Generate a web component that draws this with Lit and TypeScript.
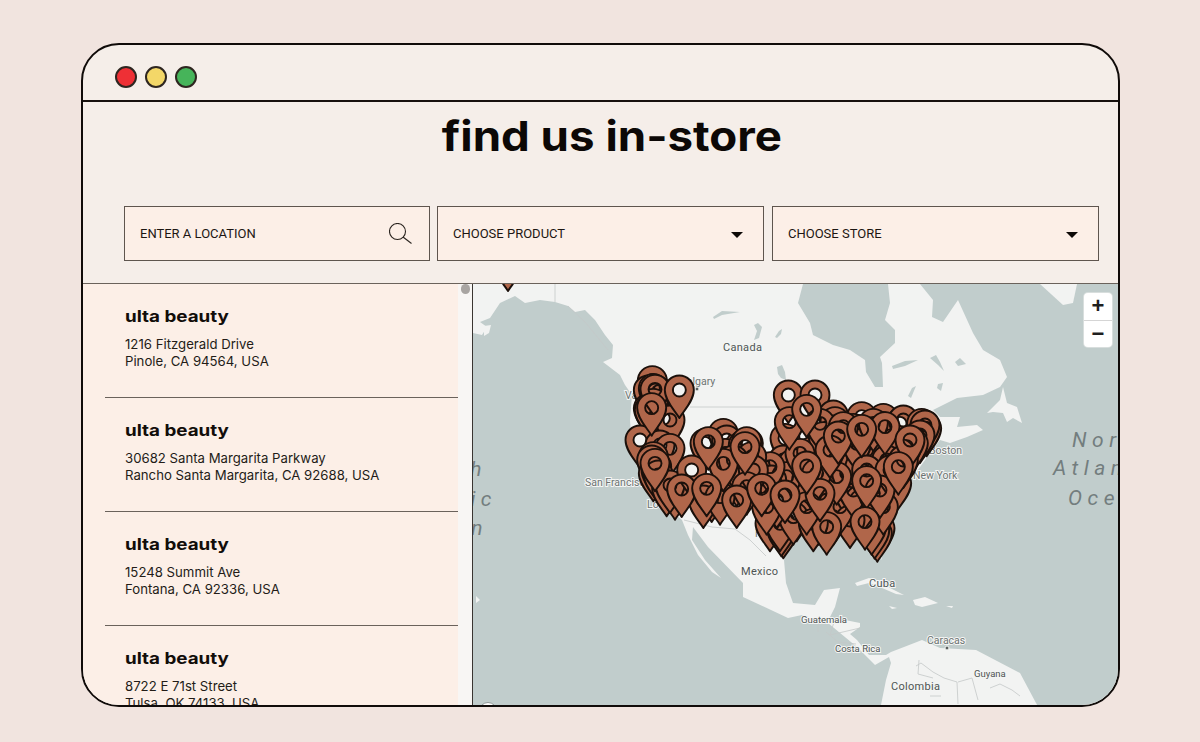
import { LitElement, html, svg, css } from "lit";
import { customElement } from "lit/decorators.js";

const STORES = [
  ["1216 Fitzgerald Drive", "Pinole, CA 94564, USA"],
  ["30682 Santa Margarita Parkway", "Rancho Santa Margarita, CA 92688, USA"],
  ["15248 Summit Ave", "Fontana, CA 92336, USA"],
  ["8722 E 71st Street", "Tulsa, OK 74133, USA"],
];

const PIN = "M0 28C-4 21-14.5 11-14.5 0A14.5 14.5 0 1 1 14.5 0C14.5 11 4 21 0 28ZM6.5 0A6.5 6.5 0 1 0-6.5 0A6.5 6.5 0 1 0 6.5 0Z";

// head centres, measured on a 3x grid whose origin is at (620,360)
const BACK = [
  [97,62],[85,90],[115,95],[100,85],[105,90],[100,130],[85,145],[130,175],[150,180],[88,150],[60,240],[120,255],[150,265],[100,290],[95,300],[110,320],[100,340],[108,330],[115,345],[140,385],[165,395],[150,375],[260,392],[275,402],[255,250],[310,220],[320,240],[315,280],[385,250],[370,255],[380,245],[350,355],[420,340],[505,105],[585,105],[495,235],[490,300],[520,310],[575,275],[640,165],[645,185],[640,220],[725,170],[700,205],[660,260],[670,280],[630,315],[615,350],[650,390],[680,340],[700,290],[790,175],[840,190],[850,180],[905,190],[920,205],[915,195],[900,225],[880,250],[760,310],[780,280],[820,250],[800,400],[770,370],[810,360],[760,240],[740,270],[555,400],[560,360],[605,445],[595,470],[680,450],[760,450],[745,470],[770,495],[780,505],[772,521],[764,512],[755,500],[465,470],[450,490],[490,511],[484,505],[480,490],[530,460],[520,470],[455,360],[500,350],[620,420],[640,470],[580,490],[720,420],[720,320],[600,300],[690,400],[780,340],[860,260],[710,250],[610,230],[600,190],[670,200],[760,190],[840,280],[450,320],[540,280],[470,420],[395,290],[340,300],[250,420],[300,410],[440,440],[800,300],[830,370],[790,440],[730,430],[690,480],[660,440],[620,500],[700,390],[760,400],[740,330],[650,350],[590,340],[810,330],[850,300],[630,270],[560,440],[400,330],[310,310],[380,380],[780,390],[600,400],
];
const FRONT = [
  [105,88],[178,90],[95,143],[105,310],[215,330],[185,387],[260,385],[265,245],[375,260],[350,420],[425,385],[508,185],[560,148],[560,318],[495,405],[740,362],[655,228],[795,200],[725,208],[870,240],[835,320],[735,485],
];

const LAND = "473,284 920,284 933,300 932,317 943,322 958,300 973,333 983,350 1000,360 1007,377 1000,387 983,395 957,398 933,410 940,417 960,417 957,427 977,425 983,430 967,437 950,443 940,440 930,453 920,467 913,477 906,490 895,500 885,515 880,525 882,560 872,540 862,525 845,525 825,530 815,533 800,530 790,540 784,560 786,583 793,603 815,605 824,590 840,588 835,607 830,617 860,623 860,627 850,634 857,640 869,655 886,655 891,652 904,647 922,640 940,648 976,650 1020,673 1036,703 1040,710 880,710 886,680 891,663 889,657 875,665 857,647 828,623 802,615 788,618 743,597 743,583 708,547 693,527 692,540 705,560 721,578 712,572 698,555 688,535 682,520 665,505 650,490 640,470 632,450 630,420 632,395 625,385 620,375 603,362 612,358 613,345 605,335 595,320 585,310 575,312 568,306 555,302 540,300 525,303 515,296 500,303 490,318 480,322 487,327 482,335 473,333";
const SEA_SHAPES = [
  "803,284 798,303 810,323 813,335 833,345 850,350 865,360 866,372 875,387 883,387 882,363 880,357 895,343 895,330 885,320 890,303 888,284",
  "777,367 782,365 785,372 786,380 781,378 778,374",
  "713,317 722,311 740,312 722,315 714,319",
  "754,325 758,323 762,327 759,338 754,340 757,331",
  "775,337 779,331 782,329 781,334 777,338",
  "892,366 905,361 918,360 905,366 893,369",
  "930,358 936,355 940,362 944,371 938,365",
  "955,362 960,358 966,364 958,366",
  "908,396 912,388 916,386 911,398",
  "938,384 943,383 941,391 937,388",
];
const ISLANDS = [
  "987,413 1000,400 1003,387 1007,403 1017,407 1022,423 1013,418 1007,422 1003,413 993,412",
  "1040,284 1063,305 1073,303 1077,284",
  "855,583 869,578 880,581 890,588 904,595 896,594 882,588 869,583 857,586",
  "913,600 925,597 938,603 922,607 915,605",
  "889,606 897,608 892,609",
  "946,606 953,606 952,608",
  "476,596 480,600 476,603",
  "484,326 491,325 489,333 484,336",
];
const BORDERS = [
  "M555 284V302", "M568 306L585 322L608 350", "M690 407H800", "M684 520L712 527L735 529L750 540L766 556",
  "M818 632L818 620L834 622L830 635L860 628", "M826 632L838 642L856 644",
  "M916 666L921 663L933 672L944 678L957 682L958 704", "M958 682L972 678L978 700", "M990 688L1000 684L1012 690L1020 696",
  "M919 660L918 674L933 678", "M930 696L941 696",
];
const LABELS: [string, number, number, string][] = [
  ["Canada", 723, 351, "c"], ["Calgary", 680, 385, "s"], ["Vancouver", 625, 399, "s"],
  ["San Francisco", 585, 486, "s"], ["Los Angeles", 647, 508, "s"], ["Houston", 755, 537, "s"],
  ["Boston", 929, 454, "s"], ["New York", 913, 479, "s"],
  ["Mexico", 741, 575, "c"], ["Cuba", 869, 587, "c"], ["Guatemala", 801, 623, "t"],
  ["Costa Rica", 835, 652, "t"], ["Caracas", 927, 644, "s"], ["Colombia", 891, 690, "c"], ["Guyana", 974, 677, "t"],
];
const OCEAN: [string, number, number, string][] = [
  ["North", 1072, 447, "start"], ["Atlantic", 1053, 475, "start"], ["Ocean", 1068, 505, "start"],
  ["North", 487, 476, "end"], ["Pacific", 497, 506, "end"], ["Ocean", 488, 535, "end"],
];

@customElement("app-root")
export class AppRoot extends LitElement {
  static styles = css`
    :host { display: block; width: 1200px; height: 742px; background: #f1e4df; font-family: "Inter", "Liberation Sans", sans-serif; color: #17120f; }
    .page { display: flex; height: 742px; padding: 43px 80px 35px 81px; box-sizing: border-box; }
    .window { flex: 1; display: flex; flex-direction: column; border: 2px solid #100b09; border-radius: 38px; overflow: hidden; background: #f5eee9; }
    .chrome { flex: none; display: flex; align-items: center; gap: 8px; height: 57px; padding: 8px 0 0 32px; box-sizing: border-box; border-bottom: 2px solid #17110e; }
    .dot { width: 22px; height: 22px; box-sizing: border-box; border-radius: 50%; border: 2px solid #2e2620; }
    .red { background: #ee3035; } .yellow { background: #f3d768; } .green { background: #46b45a; }
    .head { flex: none; height: 182px; box-sizing: border-box; padding: 8px 0 0 22px; border-bottom: 1.5px solid #6a625b; display: flex; flex-direction: column; align-items: center; }
    h1 { margin: 0; font-size: 41px; line-height: 52px; font-weight: 700; color: #0c0806; transform: scaleX(1.113); }
    .filters { display: grid; grid-template-columns: 306px 327px 328px; column-gap: 7px; margin-top: 44px; }
    .field { height: 55px; box-sizing: border-box; border: 1.5px solid #5e554e; background: #fcefe7; display: flex; align-items: center; justify-content: space-between; padding: 0 20px 0 15px; font-family: "Roboto", sans-serif; font-size: 13px; color: #1c1612; }
    .field.last { margin-left: 1px; }
    .caret { width: 0; height: 0; border-left: 6.5px solid transparent; border-right: 6.5px solid transparent; border-top: 6.5px solid #0d0907; margin-top: 2px; }
    .search { display: block; margin-right: -2.5px; }
    .body { flex: 1; min-height: 0; display: flex; }
    .list { flex: none; width: 375px; box-sizing: border-box; padding-left: 22px; background: #fcefe7; overflow: hidden; }
    .item { height: 114px; box-sizing: border-box; border-bottom: 1.5px solid #6a625b; padding: 21px 0 0 20px; }
    .item:last-child { border-bottom: none; }
    h2 { margin: 0; font-size: 16px; line-height: 22px; font-weight: 700; color: #120d0a; transform: scaleX(1.175); transform-origin: left center; }
    .addr { margin-top: 9px; font-size: 13.2px; line-height: 17px; color: #231c17; }
    .track { flex: none; width: 14px; background: #f8f6f4; }
    .thumb { width: 9px; height: 10px; margin-left: 3px; border-radius: 5px; background: #a9a5a2; }
    .map { flex: 1; min-width: 0; position: relative; border-left: 1.5px solid #3a3531; overflow: hidden; background: #c1cdcc; }
    .map > svg { display: block; position: absolute; right: 0; top: 0; }
    .zoom { position: absolute; top: 9px; right: 6px; width: 28px; height: 54px; background: #fff; border-radius: 4px; display: flex; flex-direction: column; box-shadow: 0 0 0 1px #d8dedd; }
    .zoom span { flex: 1; display: flex; align-items: center; justify-content: center; font: 700 22px/1 "Liberation Sans", sans-serif; color: #1f1f1f; }
    .zoom span + span { border-top: 1px solid #d5d5d5; }
    .land { fill: #f2f3f2; }
    .sea { fill: #c1cdcc; }
    .bd { fill: none; stroke: #c4c8c8; stroke-width: 0.8; }
    .label { font-family: "Roboto", sans-serif; fill: #4e5453; stroke: #f4f5f4; stroke-width: 2px; paint-order: stroke; }
    .c { font-size: 11px; letter-spacing: 0.3px; }
    .s { font-size: 10.5px; fill: #6d7372; }
    .t { font-size: 9.5px; }
    .ocean { font-family: "Roboto", sans-serif; font-style: italic; font-size: 21px; letter-spacing: 5.5px; fill: #737d7e; }
    .pin { fill: #b0664a; fill-rule: evenodd; stroke: #1b100b; stroke-width: 1.9; stroke-linejoin: round; }
    .dotmark { fill: #5a5f5e; stroke: #f4f5f4; }
  `;

  private pin([x, y]: number[]) {
    return svg`<path class="pin" transform="translate(${620 + x / 3} ${360 + y / 3})" d=${PIN}></path>`;
  }

  private map() {
    return svg`<svg width="645" height="421" viewBox="473 284 645 421">
      <polygon class="land" points=${LAND}></polygon>
      ${SEA_SHAPES.map((p) => svg`<polygon class="sea" points=${p}></polygon>`)}
      ${ISLANDS.map((p) => svg`<polygon class="land" points=${p}></polygon>`)}
      ${BORDERS.map((d) => svg`<path class="bd" d=${d}></path>`)}
      ${OCEAN.map(([t, x, y, a]) => svg`<text class="ocean" text-anchor=${a} x=${x} y=${y}>${t}</text>`)}
      ${LABELS.map(([t, x, y, c]) => svg`<text class="label ${c}" x=${x} y=${y}>${t}</text>`)}
      <circle class="dotmark" cx="697" cy="389" r="2"></circle>
      <circle class="dotmark" cx="947" cy="648" r="2"></circle>
      <circle cx="488" cy="711" r="8.5" fill="#fff" stroke="#8f9897"></circle>
      <path class="pin" transform="translate(508 263)" d=${PIN}></path>
      ${BACK.map((p) => this.pin(p))}
      ${FRONT.map((p) => this.pin(p))}
    </svg>`;
  }

  render() {
    return html`<div class="page"><div class="window">
      <div class="chrome"><i class="dot red"></i><i class="dot yellow"></i><i class="dot green"></i></div>
      <div class="head">
        <h1>find us in-store</h1>
        <div class="filters">
          <div class="field"><span>ENTER A LOCATION</span>
            <svg class="search" width="23" height="21" viewBox="0 0 23 21" fill="none" stroke="#2b2520" stroke-width="1.1"><circle cx="8.5" cy="8.5" r="8"></circle><path d="M14 14L22.5 20.5"></path></svg>
          </div>
          <div class="field"><span>CHOOSE PRODUCT</span><i class="caret"></i></div>
          <div class="field last"><span>CHOOSE STORE</span><i class="caret"></i></div>
        </div>
      </div>
      <div class="body">
        <div class="list">
          ${STORES.map(([a, b]) => html`<div class="item"><h2>ulta beauty</h2><div class="addr">${a}<br />${b}</div></div>`)}
        </div>
        <div class="track"><div class="thumb"></div></div>
        <div class="map">
          ${this.map()}
          <div class="zoom"><span>+</span><span>−</span></div>
        </div>
      </div>
    </div></div>`;
  }
}
